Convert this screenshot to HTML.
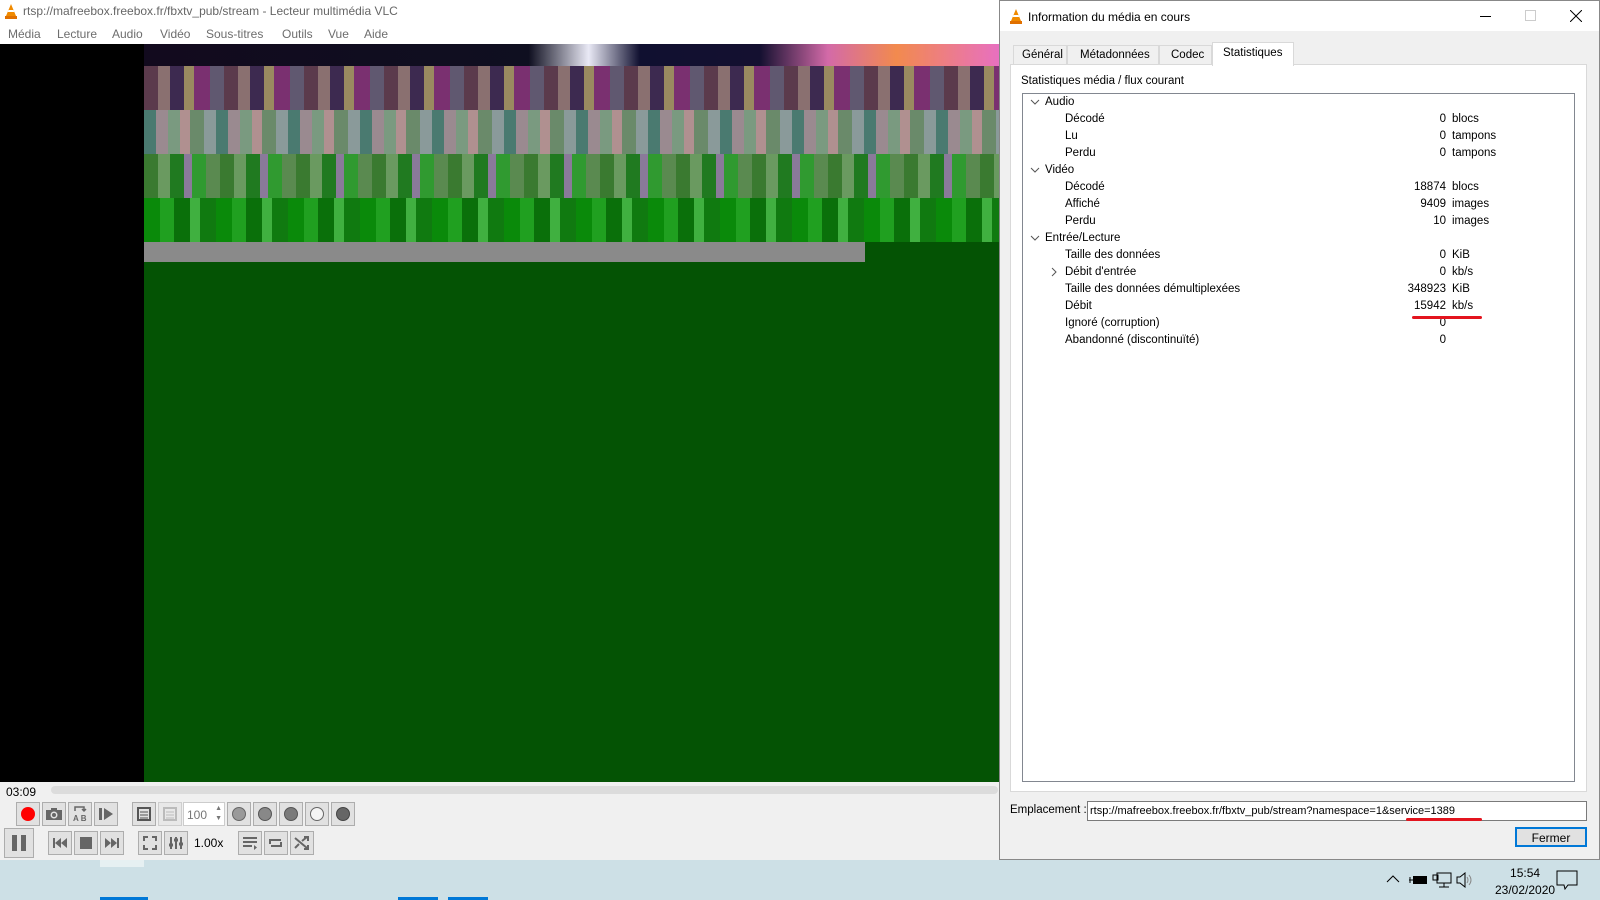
<!DOCTYPE html>
<html><head><meta charset="utf-8"><style>
*{margin:0;padding:0;box-sizing:border-box}
body{width:1600px;height:900px;position:relative;overflow:hidden;background:#f0f0f0;font-family:"Liberation Sans",sans-serif;font-size:12px;color:#000}
.a{position:absolute}
.btn{position:absolute;width:24px;height:24px;background:#e1e1e1;border:1px solid #adadad;display:flex;align-items:center;justify-content:center}
.row{position:absolute;left:0;width:100%;height:17px;line-height:17px;white-space:nowrap;font-size:11.5px}
.lbl{position:absolute}
.val{position:absolute;left:0;width:423px;text-align:right}
.unit{position:absolute;left:429px}
.chev{position:absolute;left:7px;top:0}
</style></head><body>
<!-- VLC title -->
<div class="a" style="left:0;top:0;width:1000px;height:22px;background:#fff"></div>
<svg class="a" style="left:4px;top:4px" width="14" height="15" viewBox="0 0 14 15"><path d="M7 0L12 12H2Z" fill="#f08a00"/><path d="M1 12h12v3H1z" fill="#e07000"/><path d="M4.5 6h5l.8 2h-6.6z" fill="#fff"/></svg>
<div class="a" style="left:23px;top:4px;color:#666">rtsp://mafreebox.freebox.fr/fbxtv_pub/stream - Lecteur multimédia VLC</div>
<div class="a" style="left:0;top:22px;width:1000px;height:22px;background:#fff"></div>
<div class="a" style="top:27px;left:8px;color:#6d6d6d">Média</div>
<div class="a" style="top:27px;left:57px;color:#6d6d6d">Lecture</div>
<div class="a" style="top:27px;left:112px;color:#6d6d6d">Audio</div>
<div class="a" style="top:27px;left:160px;color:#6d6d6d">Vidéo</div>
<div class="a" style="top:27px;left:206px;color:#6d6d6d">Sous-titres</div>
<div class="a" style="top:27px;left:282px;color:#6d6d6d">Outils</div>
<div class="a" style="top:27px;left:328px;color:#6d6d6d">Vue</div>
<div class="a" style="top:27px;left:364px;color:#6d6d6d">Aide</div>
<!-- video -->
<div class="a" style="left:0;top:44px;width:144px;height:738px;background:#000"></div>
<div class="a" style="left:144px;top:44px;width:855px;height:738px;background:#045304"></div>
<div class="a" style="left:144px;top:44px;width:855px;height:22px;background:linear-gradient(90deg,#120a1e 0%,#0f0f20 45%,#e9e9f5 52%,#101030 58%,#141030 72%,#d36aa8 80%,#f28a4e 88%,#e870c0 100%)"></div>
<div class="a" style="left:144px;top:66px;width:855px;height:44px;background:repeating-linear-gradient(90deg,#5b3a4c 0 14px,#8a7070 14px 26px,#3d2a50 26px 40px,#9a8a60 40px 50px,#7a3070 50px 66px,#605870 66px 80px)"></div>
<div class="a" style="left:144px;top:110px;width:855px;height:44px;background:repeating-linear-gradient(90deg,#4a7a70 0 12px,#9a8a90 12px 24px,#7a9a80 24px 36px,#b09090 36px 46px,#6a8a6a 46px 60px,#8a9a9a 60px 72px)"></div>
<div class="a" style="left:144px;top:154px;width:855px;height:44px;background:repeating-linear-gradient(90deg,#3a7a30 0 14px,#6a9a60 14px 26px,#207a20 26px 40px,#8a7a9a 40px 48px,#309a30 48px 62px,#5a8a50 62px 76px)"></div>
<div class="a" style="left:144px;top:198px;width:855px;height:44px;background:repeating-linear-gradient(90deg,#0a8a0a 0 16px,#20a020 16px 30px,#0a700a 30px 46px,#40b040 46px 56px,#107a10 56px 72px)"></div>
<div class="a" style="left:144px;top:242px;width:721px;height:20px;background:#8a8a8a"></div>
<!-- controls -->
<div class="a" style="left:0;top:782px;width:999px;height:78px;background:#f0f0f0"></div>
<div class="a" style="left:6px;top:785px;font-size:12px">03:09</div>
<div class="a" style="left:51px;top:786px;width:947px;height:8px;background:#dcdcdc;border-radius:4px"></div>
<div class="btn" style="left:16px;top:802px"><div style="width:14px;height:14px;border-radius:50%;background:#f00"></div></div>
<div class="btn" style="left:42px;top:802px"><svg width="18" height="14"><rect x="1" y="3" width="16" height="10" fill="#666"/><rect x="6" y="1" width="6" height="3" fill="#666"/><circle cx="9" cy="8" r="3.5" fill="#e1e1e1"/><circle cx="9" cy="8" r="2" fill="#666"/></svg></div>
<div class="btn" style="left:68px;top:802px"><svg width="16" height="18" fill="none" stroke="#666" stroke-width="1.5"><path d="M3 6V2h9v4M10 4l2 2 2-2"/><text x="1" y="16" font-size="8" font-family="Liberation Sans" fill="#666" stroke="none" font-weight="bold">A B</text></svg></div>
<div class="btn" style="left:94px;top:802px"><svg width="16" height="14"><rect x="1" y="1" width="3" height="12" fill="#666"/><path d="M6 1L15 7L6 13Z" fill="#666"/></svg></div>
<div class="btn" style="left:132px;top:802px"><svg width="14" height="14"><rect x="1" y="1" width="12" height="12" fill="none" stroke="#555" stroke-width="2"/><path d="M3 5h8M3 8h8M3 11h8" stroke="#555"/></svg></div>
<div class="btn" style="left:158px;top:802px;opacity:.5"><svg width="14" height="14"><rect x="1" y="1" width="12" height="12" fill="none" stroke="#888" stroke-width="2"/><path d="M3 5h8M3 8h8M3 11h8" stroke="#888"/></svg></div>
<div class="a" style="left:183px;top:802px;width:42px;height:24px;background:#fff;border:1px solid #ccc;color:#777;padding:5px 0 0 3px">100<span style="position:absolute;right:2px;top:1px;font-size:7px;line-height:10px">▲<br>▼</span></div>
<div class="btn" style="left:227px;top:802px"><div style="width:14px;height:14px;border-radius:50%;background:#9a9a9a;border:1px solid #666"></div></div>
<div class="btn" style="left:253px;top:802px"><div style="width:14px;height:14px;border-radius:50%;background:#888;border:1px solid #555"></div></div>
<div class="btn" style="left:279px;top:802px"><div style="width:14px;height:14px;border-radius:50%;background:#7a7a7a;border:1px solid #555"></div></div>
<div class="btn" style="left:305px;top:802px"><div style="width:14px;height:14px;border-radius:50%;background:#f4f4f4;border:1px solid #666"></div></div>
<div class="btn" style="left:331px;top:802px"><div style="width:14px;height:14px;border-radius:50%;background:#666;border:1px solid #444"></div></div>
<div class="btn" style="left:4px;top:828px;width:30px;height:30px"><svg width="16" height="18"><rect x="1" y="1" width="5" height="16" fill="#666"/><rect x="10" y="1" width="5" height="16" fill="#666"/></svg></div>
<div class="btn" style="left:48px;top:831px"><svg width="16" height="12"><rect x="1" y="1" width="2" height="10" fill="#666"/><path d="M9 1L3 6L9 11ZM15 1L9 6L15 11Z" fill="#666"/></svg></div>
<div class="btn" style="left:74px;top:831px"><div style="width:12px;height:12px;background:#666"></div></div>
<div class="btn" style="left:100px;top:831px"><svg width="16" height="12"><rect x="13" y="1" width="2" height="10" fill="#666"/><path d="M1 1L7 6L1 11ZM7 1L13 6L7 11Z" fill="#666"/></svg></div>
<div class="btn" style="left:138px;top:831px"><svg width="14" height="14" fill="none" stroke="#666" stroke-width="2"><path d="M1 5V1h4M9 1h4v4M13 9v4H9M5 13H1V9"/></svg></div>
<div class="btn" style="left:164px;top:831px"><svg width="16" height="14" stroke="#666" stroke-width="2"><path d="M3 1v12M8 1v12M13 1v12"/><path d="M1 9h4M6 4h4M11 8h4" stroke-width="3"/></svg></div>
<div class="a" style="left:194px;top:836px">1.00x</div>
<div class="btn" style="left:238px;top:831px"><svg width="16" height="14" stroke="#666" stroke-width="2"><path d="M1 2h14M1 6h14M1 10h9"/><path d="M12 9l3 2.5-3 2.5z" fill="#666" stroke="none"/></svg></div>
<div class="btn" style="left:264px;top:831px"><svg width="16" height="14" fill="none" stroke="#666" stroke-width="2"><path d="M2 8V4h11M13 6v4H3"/></svg></div>
<div class="btn" style="left:290px;top:831px"><svg width="16" height="14" fill="none" stroke="#666" stroke-width="2"><path d="M1 2l12 10M1 12l4-4M8 5l5-4M10 1h4v4M10 13h4V9"/></svg></div>
<!-- taskbar -->
<div class="a" style="left:0;top:860px;width:1600px;height:40px;background:#cde0e6"></div>
<div class="a" style="left:100px;top:860px;width:44px;height:7px;background:#e6f0f2"></div>
<div class="a" style="left:100px;top:897px;width:48px;height:3px;background:#0078d7"></div>
<div class="a" style="left:398px;top:897px;width:40px;height:3px;background:#0078d7"></div>
<div class="a" style="left:448px;top:897px;width:40px;height:3px;background:#0078d7"></div>
<svg class="a" style="left:1386px;top:874px" width="14" height="10" fill="none" stroke="#000"><path d="M1 8l6-6 6 6"/></svg>
<svg class="a" style="left:1408px;top:873px" width="20" height="14"><rect x="5" y="3" width="14" height="8" fill="#000"/><path d="M1 7h4M2 4v6" stroke="#000"/></svg>
<svg class="a" style="left:1432px;top:872px" width="20" height="16" fill="none" stroke="#000"><rect x="5" y="1" width="14" height="10"/><rect x="1" y="3" width="5" height="5"/><path d="M12 11v4M7 15h10"/></svg>
<svg class="a" style="left:1456px;top:872px" width="18" height="16" fill="none" stroke="#000"><path d="M1 5h3l5-4v14l-5-4H1z"/><path d="M11 5q2 3 0 6M13 3q4 5 0 10" stroke="#888"/></svg>
<div class="a" style="left:1495px;top:865px;text-align:center;line-height:17px">15:54<br>23/02/2020</div>
<svg class="a" style="left:1556px;top:870px" width="22" height="20" fill="none" stroke="#000"><path d="M1 1h20v14H12l-3 4-1-4H1z"/></svg>
<!-- dialog -->
<div class="a" style="left:999px;top:0;width:601px;height:860px;background:#f0f0f0;border:1px solid #888">
 <div class="a" style="left:0;top:0;width:599px;height:30px;background:#fff"></div>
 <svg class="a" style="left:9px;top:8px" width="14" height="15" viewBox="0 0 14 15"><path d="M7 0L12 12H2Z" fill="#f08a00"/><path d="M1 12h12v3H1z" fill="#e07000"/><path d="M4.5 6h5l.8 2h-6.6z" fill="#fff"/></svg>
 <div class="a" style="left:28px;top:9px">Information du média en cours</div>
 <div class="a" style="left:480px;top:15px;width:11px;height:1px;background:#000"></div>
 <div class="a" style="left:525px;top:9px;width:11px;height:11px;border:1px solid #ccc"></div>
 <svg class="a" style="left:570px;top:9px" width="12" height="12" stroke="#000"><path d="M0 0L12 12M12 0L0 12"/></svg>
 <div class="a" style="left:13px;top:44px;width:54px;height:20px;border:1px solid #d9d9d9;background:#f0f0f0;padding:3px 0 0 8px;font-size:11.5px">Général</div>
 <div class="a" style="left:67px;top:44px;width:92px;height:20px;border:1px solid #d9d9d9;padding:3px 0 0 12px;font-size:11.5px">Métadonnées</div>
 <div class="a" style="left:159px;top:44px;width:53px;height:20px;border:1px solid #d9d9d9;padding:3px 0 0 11px;font-size:11.5px">Codec</div>
 <div class="a" style="left:212px;top:41px;width:82px;height:24px;border:1px solid #d9d9d9;border-bottom:none;background:#fff;padding:4px 0 0 10px;z-index:2;font-size:11.5px">Statistiques</div>
 <div class="a" style="left:10px;top:63px;width:577px;height:728px;background:#fff;border:1px solid #d9d9d9">
  <div class="a" style="left:10px;top:10px;font-size:11.5px">Statistiques média / flux courant</div>
  <div class="a" style="left:11px;top:28px;width:553px;height:689px;border:1px solid #828790">
   <svg width="0" height="0" style="position:absolute"><defs></defs></svg>
   <div class="row" style="top:0px"><svg class="chev" width="10" height="17" fill="none" stroke="#555"><path d="M1 6l4 4 4-4"/></svg><span class="lbl" style="left:22px">Audio</span></div>
   <div class="row" style="top:17px"><span class="lbl" style="left:42px">Décodé</span><span class="val">0</span><span class="unit">blocs</span></div>
   <div class="row" style="top:34px"><span class="lbl" style="left:42px">Lu</span><span class="val">0</span><span class="unit">tampons</span></div>
   <div class="row" style="top:51px"><span class="lbl" style="left:42px">Perdu</span><span class="val">0</span><span class="unit">tampons</span></div>
   <div class="row" style="top:68px"><svg class="chev" width="10" height="17" fill="none" stroke="#555"><path d="M1 6l4 4 4-4"/></svg><span class="lbl" style="left:22px">Vidéo</span></div>
   <div class="row" style="top:85px"><span class="lbl" style="left:42px">Décodé</span><span class="val">18874</span><span class="unit">blocs</span></div>
   <div class="row" style="top:102px"><span class="lbl" style="left:42px">Affiché</span><span class="val">9409</span><span class="unit">images</span></div>
   <div class="row" style="top:119px"><span class="lbl" style="left:42px">Perdu</span><span class="val">10</span><span class="unit">images</span></div>
   <div class="row" style="top:136px"><svg class="chev" width="10" height="17" fill="none" stroke="#555"><path d="M1 6l4 4 4-4"/></svg><span class="lbl" style="left:22px">Entrée/Lecture</span></div>
   <div class="row" style="top:153px"><span class="lbl" style="left:42px">Taille des données</span><span class="val">0</span><span class="unit">KiB</span></div>
   <div class="row" style="top:170px"><svg class="chev" style="left:26px" width="10" height="17" fill="none" stroke="#555"><path d="M3 4l4 4-4 4"/></svg><span class="lbl" style="left:42px">Débit d'entrée</span><span class="val">0</span><span class="unit">kb/s</span></div>
   <div class="row" style="top:187px"><span class="lbl" style="left:42px">Taille des données démultiplexées</span><span class="val">348923</span><span class="unit">KiB</span></div>
   <div class="row" style="top:204px"><span class="lbl" style="left:42px">Débit</span><span class="val">15942</span><span class="unit">kb/s</span></div>
   <div class="row" style="top:221px"><span class="lbl" style="left:42px">Ignoré (corruption)</span><span class="val">0</span></div>
   <div class="row" style="top:238px"><span class="lbl" style="left:42px">Abandonné (discontinuïté)</span><span class="val">0</span></div>
   <div class="a" style="left:389px;top:222px;width:70px;height:3px;background:#e3141e;border-radius:2px"></div>
  </div>
 </div>
 <div class="a" style="left:10px;top:803px;white-space:nowrap;font-size:11.5px">Emplacement&nbsp;:</div>
 <div class="a" style="left:87px;top:800px;width:500px;height:20px;background:#fff;border:1px solid #7a7a7a;padding:3px 0 0 2px;white-space:nowrap;font-size:11px">rtsp://mafreebox.freebox.fr/fbxtv_pub/stream?namespace=1&amp;service=1389</div>
 <div class="a" style="left:406px;top:817px;width:76px;height:3px;background:#e3141e;border-radius:2px"></div>
 <div class="a" style="left:515px;top:826px;width:72px;height:20px;background:#e1e1e1;border:2px solid #0078d7;text-align:center;padding-top:2px">Fermer</div>
</div>
</body></html>
